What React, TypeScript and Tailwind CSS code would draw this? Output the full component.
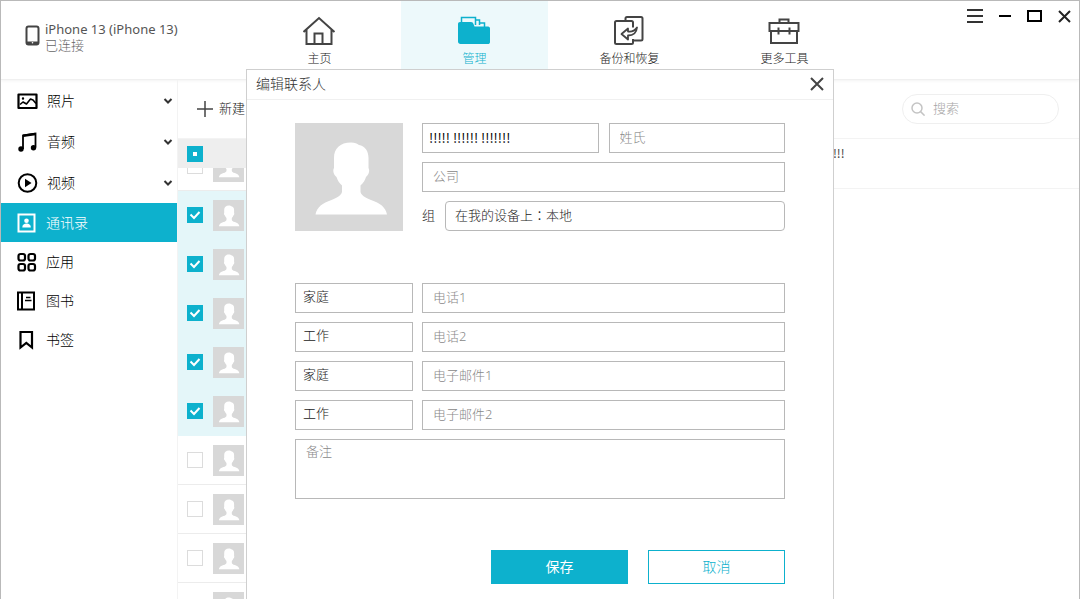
import { ReactNode, useEffect, useRef, useState } from 'react';

const sidebarItems = [
  { id: 'photos', label: '照片', icon: <PhotoIcon />, expandable: true },
  { id: 'music', label: '音频', icon: <MusicIcon />, expandable: true },
  { id: 'videos', label: '视频', icon: <VideoIcon />, expandable: true },
  { id: 'contacts', label: '通讯录', icon: <ContactIcon /> },
  { id: 'apps', label: '应用', icon: <AppsIcon /> },
  { id: 'books', label: '图书', icon: <BookIcon /> },
  { id: 'bookmarks', label: '书签', icon: <BookmarkIcon /> },
];

const tabs = [
  { id: 'home', label: '主页', icon: <HomeIcon /> },
  { id: 'manage', label: '管理', icon: <FolderIcon /> },
  { id: 'backup', label: '备份和恢复', icon: <BackupIcon /> },
  { id: 'tools', label: '更多工具', icon: <ToolboxIcon /> },
];

const initialRows = [false, true, true, true, true, true, false, false, false, false];

const methods = [
  { id: 'phone1', kind: '家庭', placeholder: '电话1' },
  { id: 'phone2', kind: '工作', placeholder: '电话2' },
  { id: 'email1', kind: '家庭', placeholder: '电子邮件1' },
  { id: 'email2', kind: '工作', placeholder: '电子邮件2' },
];

export default function App() {
  const [open, setOpen] = useState(true);

  return (
    <div className="relative flex h-screen flex-col overflow-hidden border-x border-t border-[#b9b9b9] bg-white font-['Noto_Sans','Noto_Sans_CJK_SC',sans-serif] text-[13px] font-light text-[#222]">
      <Header />
      <div className="flex min-h-0 flex-1">
        <Sidebar />
        <Contacts />
      </div>
      {open && <EditContact onClose={() => setOpen(false)} />}
    </div>
  );
}

function Header() {
  return (
    <header className="flex h-[79px] shrink-0 border-b border-[#f0f0f0] shadow-[0_1px_3px_rgba(0,0,0,0.05)]">
      <div className="flex w-[245px] items-start gap-[5px] pt-5 pl-[23px]">
        <PhoneIcon />
        <div className="leading-4">
          <p className="font-normal text-[#555]">iPhone 13 (iPhone 13)</p>
          <p className="text-[#666]">已连接</p>
        </div>
      </div>
      <nav className="flex gap-2">
        {tabs.map((tab) => (
          <button
            key={tab.id}
            type="button"
            className={`flex w-[147px] flex-col items-center pt-3 text-xs leading-4 ${
              tab.id === 'manage' ? 'bg-[#edf9fb] text-[#0db1cd]' : 'text-[#222]'
            }`}
          >
            {tab.icon}
            <span className="mt-1">{tab.label}</span>
          </button>
        ))}
      </nav>
      <div className="ml-auto flex h-[30px] items-center gap-3 pr-1 text-black">
        <WindowButton label="菜单">
          <path d="M0 3h16M0 9h16M0 15h16" stroke="#333" strokeWidth="2" />
        </WindowButton>
        <WindowButton label="最小化">
          <path d="M2 9h12" stroke="currentColor" strokeWidth="2" />
        </WindowButton>
        <WindowButton label="最大化">
          <path d="M1 4h13v10H1z" stroke="currentColor" strokeWidth="2" />
        </WindowButton>
        <WindowButton label="关闭">
          <path d="M2 4l11 11M13 4L2 15" stroke="#222" strokeWidth="2" />
        </WindowButton>
      </div>
    </header>
  );
}

function WindowButton({ label, children }: { label: string; children: ReactNode }) {
  return (
    <button type="button" aria-label={label} className="w-[18px]">
      <svg width="16" height="18" viewBox="0 0 16 18" fill="none">
        {children}
      </svg>
    </button>
  );
}

function Sidebar() {
  return (
    <aside className="w-[177px] shrink-0 border-r border-[#f3f3f3] text-sm text-black">
      {sidebarItems.map((item) => (
        <button
          key={item.id}
          type="button"
          className={`flex w-full items-center gap-2 pr-1 pl-[15px] ${item.expandable ? 'h-[41px]' : 'h-[39px]'} ${
            item.id === 'contacts' ? 'bg-[#0db1cd] text-white' : ''
          }`}
        >
          {item.icon}
          <span>{item.label}</span>
          {item.expandable && (
            <svg width="10" height="8" viewBox="0 0 10 8" fill="none" className="ml-auto">
              <path d="M1.500 2L5 5.500 8.500 2" stroke="#333" strokeWidth="2" />
            </svg>
          )}
        </button>
      ))}
    </aside>
  );
}

function Contacts() {
  const [rows, setRows] = useState(initialRows);
  const all = rows.every(Boolean);

  return (
    <main className="flex min-w-0 flex-1 flex-col">
      <div className="flex h-[59px] shrink-0 items-center justify-between border-b border-[#f3f3f3] pr-5 pl-[19px]">
        <button type="button" className="flex items-center gap-1.5">
          <svg width="16" height="16" viewBox="0 0 16 16" fill="none">
            <path d="M0 8h16M8 0v16" stroke="#444" strokeWidth="1.500" />
          </svg>
          新建
        </button>
        <label className="flex h-[30px] w-[157px] items-center gap-2 rounded-full border border-[#efefef] pl-2">
          <svg width="14" height="14" viewBox="0 0 14 14" fill="none">
            <circle cx="6" cy="6" r="5" stroke="#c4c4c4" strokeWidth="1.500" />
            <path d="M9.600 9.600l4 4" stroke="#c4c4c4" strokeWidth="1.500" />
          </svg>
          <input
            type="search"
            aria-label="搜索"
            placeholder="搜索"
            className="w-24 outline-none placeholder:text-[#a5a5a5]"
          />
        </label>
      </div>
      <div className="flex min-h-0 flex-1">
        <div className="flex w-[48%] flex-col">
          <div className="flex h-[29px] shrink-0 items-center bg-[#eee] px-[9px]">
            <Checkbox
              label="全选"
              checked={all}
              mixed={!all && rows.some(Boolean)}
              onChange={() => setRows(rows.map(() => !all))}
            />
          </div>
          <div className="min-h-0 flex-1 overflow-hidden">
            {/* the list opens half a row down */}
            <ul className="-mt-[26px]">
              {rows.map((checked, i) => (
                <li
                  key={i}
                  className={`flex h-[49px] items-center gap-[10px] border-b px-[9px] ${
                    checked ? 'border-[#e4f6f9] bg-[#e4f6f9]' : 'border-[#ececec]'
                  }`}
                >
                  <Checkbox
                    label={`联系人 ${i + 1}`}
                    checked={checked}
                    onChange={() => setRows(rows.map((r, n) => (n === i ? !r : r)))}
                  />
                  <Avatar className="size-[31px]" />
                </li>
              ))}
            </ul>
          </div>
        </div>
        <div className="flex-1">
          <p className="flex h-[50px] items-start border-b border-[#f3f3f3] pt-1.5 pl-[159px] font-['Noto_Sans_CJK_SC',sans-serif] text-xs font-normal text-[#444]">
            !!!!! !!!!!! !!!!!!!
          </p>
        </div>
      </div>
    </main>
  );
}

type CheckboxProps = { label: string; checked: boolean; mixed?: boolean; onChange: () => void };

function Checkbox({ label, checked, mixed = false, onChange }: CheckboxProps) {
  const ref = useRef<HTMLInputElement>(null);

  useEffect(() => {
    if (ref.current) ref.current.indeterminate = mixed;
  }, [mixed]);

  return (
    <span className="grid size-4 shrink-0">
      <input
        ref={ref}
        type="checkbox"
        aria-label={label}
        checked={checked}
        onChange={onChange}
        className="col-start-1 row-start-1 size-4 appearance-none border border-[#dcdcdc] bg-white checked:border-[#0db1cd] checked:bg-[#0db1cd] indeterminate:border-[#0db1cd] indeterminate:bg-[#0db1cd]"
      />
      <svg viewBox="0 0 16 16" fill="none" className="pointer-events-none col-start-1 row-start-1 size-4">
        {mixed && <path d="M6 6h4v4H6z" fill="white" />}
        {checked && <path d="M3.500 7.500l3.500 3.500 5.500-6" stroke="white" strokeWidth="2" />}
      </svg>
    </span>
  );
}

const field = 'h-[30px] min-w-0 border border-[#b8b8b8] bg-white pb-0.5 outline-none placeholder:text-[#888]';

function EditContact({ onClose }: { onClose: () => void }) {
  return (
    <div
      role="dialog"
      aria-labelledby="dialog-title"
      className="absolute inset-x-0 top-[68px] -bottom-px mx-auto w-[588px] border border-[#cfcfcf] bg-white"
    >
      <div className="flex h-[30px] items-center justify-between border-b border-[#f0f0f0] pr-2 pb-0.5 pl-[9px]">
        <h2 id="dialog-title" className="text-sm text-[#333]">
          编辑联系人
        </h2>
        <button type="button" aria-label="关闭" onClick={onClose}>
          <svg width="16" height="16" viewBox="0 0 16 16" fill="none">
            <path d="M2 2l12 12M14 2L2 14" stroke="#444" strokeWidth="2" />
          </svg>
        </button>
      </div>
      <form className="px-12 pt-[23px]" onSubmit={(e) => e.preventDefault()}>
        <div className="flex gap-[19px]">
          <Avatar className="size-[108px]" />
          <div className="flex min-w-0 flex-1 flex-col gap-[9px]">
            <div className="grid grid-cols-2 gap-[10px]">
              <input
                aria-label="名字"
                defaultValue="!!!!! !!!!!! !!!!!!!"
                className={`${field} px-[6px] font-['Noto_Sans_CJK_SC',sans-serif] font-normal text-black`}
              />
              <input aria-label="姓氏" placeholder="姓氏" className={`${field} px-[10px]`} />
            </div>
            <input aria-label="公司" placeholder="公司" className={`${field} px-[10px]`} />
            <div className="flex items-center gap-[10px]">
              <label htmlFor="group">组</label>
              <select
                id="group"
                className={`${field} flex-1 appearance-none rounded px-[9px] font-['Noto_Sans_CJK_TC',sans-serif]`}
                lang="zh-Hant"
              >
                <option>在我的设备上：本地</option>
              </select>
            </div>
          </div>
        </div>
        <div className="mt-[52px] flex flex-col gap-[9px]">
          {methods.map((m) => (
            <div key={m.id} className="flex gap-[9px]">
              <select
                aria-label={`${m.placeholder}类型`}
                defaultValue={m.kind}
                className={`${field} w-[118px] appearance-none px-[7px]`}
              >
                <option>家庭</option>
                <option>工作</option>
              </select>
              <input aria-label={m.placeholder} placeholder={m.placeholder} className={`${field} flex-1 px-[10px]`} />
            </div>
          ))}
          <textarea
            aria-label="备注"
            placeholder="备注"
            className="h-[60px] resize-none border border-[#b8b8b8] px-[10px] py-0.5 outline-none placeholder:text-[#888]"
          />
        </div>
        <div className="mt-[51px] flex justify-end gap-5 text-sm">
          <button type="submit" className="h-[34px] w-[137px] bg-[#0db1cd] font-normal text-white">
            保存
          </button>
          <button
            type="button"
            onClick={onClose}
            className="h-[34px] w-[137px] border border-[#0db1cd] text-[#0db1cd]"
          >
            取消
          </button>
        </div>
      </form>
    </div>
  );
}

function Avatar({ className }: { className: string }) {
  return (
    <svg viewBox="0 0 108 108" className={`shrink-0 bg-[#d8d8d8] ${className}`}>
      <path
        d="M56 19.500c4 0 6 1 8 2.500 6 1 9.500 6 9.500 13v10c1.500 2 .5 7-2.500 9-1 3-2.500 6-5.500 8.500v6c0 3 4 6 10.500 8.500 9 3 14.500 7 16 14.500H20.500c1.500-7.500 7-11.500 16-14.500 6.500-2.500 10.500-5.500 10.500-8.500v-6c-3-2.500-4.500-5.500-5.500-8.500-3-2-4-7-2.500-9V35c0-9.500 6-15.500 17-15.500z"
        fill="white"
      />
    </svg>
  );
}

function PhoneIcon() {
  return (
    <svg width="16" height="30" viewBox="0 0 16 30" fill="none">
      <rect x="2.500" y="5.500" width="12" height="18" rx="2" stroke="#444" strokeWidth="2" />
      <path d="M3 20.500h11V23H3z" fill="#444" />
      <circle cx="8.500" cy="21.700" r="0.800" fill="white" />
    </svg>
  );
}

function HomeIcon() {
  return (
    <svg width="34" height="34" viewBox="1 0 34 34" fill="none" stroke="#444" strokeWidth="2">
      <path d="M1.500 19L17 5 32.500 19M4.500 16.500v14.500h25V16.500M12.500 31v-10.500h8V31" />
    </svg>
  );
}

function FolderIcon() {
  return (
    <svg width="34" height="34" viewBox="1 0 34 34" fill="none">
      <path d="M4.500 11V4.500h14V12M18.500 7h4v5M22.500 10h5v4" stroke="#0db1cd" strokeWidth="1.500" />
      <path d="M3 9h11c1.500 0 2 .8 2.500 2l1 2.500H31c1.500 0 2 1 2 2V29c0 1.500-1 2-2 2H3.500c-1.500 0-2.500-1-2.500-2.500V11c0-1.200.8-2 2-2z" fill="#0db1cd" />
    </svg>
  );
}

function BackupIcon() {
  return (
    <svg width="34" height="34" viewBox="1 0 34 34" fill="none" stroke="#444" strokeWidth="2" strokeLinejoin="round">
      <path d="M13.500 7.500v-2q0-1.500 1.500-1.500h14q1.500 0 1.500 1.500V26q0 1.500-1.500 1.500h-7.500" />
      <path d="M21 14.500v-5Q21 8 19.500 8H4.500Q3 8 3 9.500v20Q3 31 4.500 31h15q1.500 0 1.500-1.500V26" />
      <path d="M9.500 21l6.500-5.500v3c4 .5 7-1 9-4-.5 5-4 8-9 8v4z" strokeWidth="1.800" />
    </svg>
  );
}

function ToolboxIcon() {
  return (
    <svg width="34" height="34" viewBox="1 0 34 34" fill="none" stroke="#444" strokeWidth="2">
      <path d="M12.500 10V6.500h9V10M2.500 10h29v8h-29zM4 18v12h26V18M11.500 14.500v7M22.500 14.500v7" />
    </svg>
  );
}

function PhotoIcon() {
  return (
    <svg width="23" height="20" viewBox="0 0 23 20" fill="none" stroke="currentColor" strokeWidth="2.200" strokeLinejoin="round">
      <path d="M2.500 3.500h18v13.500h-18z" />
      <path d="M4 13.500l3-2.500 3.500 2 4-5 2.500 1 3 3.500" strokeWidth="1.600" />
      <circle cx="7" cy="7.500" r="0.600" strokeWidth="1.200" />
    </svg>
  );
}

function MusicIcon() {
  return (
    <svg width="23" height="20" viewBox="0 0 23 20" fill="none" stroke="currentColor" strokeWidth="1.800">
      <path d="M7 17V3.500l12.500-2v14" />
      <path d="M7 3.800l12.500-1.800" strokeWidth="2.600" />
      <circle cx="5" cy="17" r="1.800" fill="currentColor" />
      <circle cx="17.500" cy="15.800" r="1.800" fill="currentColor" />
    </svg>
  );
}

function VideoIcon() {
  return (
    <svg width="23" height="20" viewBox="0 0 23 20" fill="none">
      <circle cx="11.500" cy="10" r="8.800" stroke="currentColor" strokeWidth="2" />
      <path d="M9 5.800l6.500 4.200L9 14.200z" fill="currentColor" />
    </svg>
  );
}

function ContactIcon() {
  return (
    <svg width="22" height="20" viewBox="0 0 22 20" fill="none">
      <path d="M2.500 1.500h16v17h-16z" stroke="currentColor" strokeWidth="2" />
      <circle cx="10.500" cy="7.800" r="2.300" fill="currentColor" />
      <path d="M6.300 14.500c0-3 2-4 4.200-4s4.300 1 4.300 4z" fill="currentColor" />
    </svg>
  );
}

function AppsIcon() {
  return (
    <svg width="22" height="20" viewBox="0 0 22 20" fill="none" stroke="currentColor" strokeWidth="2.200">
      <rect x="2.500" y="2" width="6.500" height="6.500" rx="2" />
      <rect x="12.500" y="2" width="6.500" height="6.500" rx="2" />
      <rect x="2.500" y="12" width="6.500" height="6.500" rx="2" />
      <rect x="12.500" y="12" width="6.500" height="6.500" rx="2" />
    </svg>
  );
}

function BookIcon() {
  return (
    <svg width="22" height="20" viewBox="0 0 22 20" fill="none" stroke="currentColor" strokeWidth="2">
      <path d="M2 1.500h16v17H2zM6 1.500v17" />
      <path d="M10 6.500h4.500M9 9.500h6.500" strokeWidth="1.500" />
    </svg>
  );
}

function BookmarkIcon() {
  return (
    <svg width="22" height="20" viewBox="0 0 22 20" fill="none" stroke="currentColor" strokeWidth="2.200">
      <path d="M4.500 2h11.500v15.500l-5.700-4.500-5.800 4.500z" />
    </svg>
  );
}
